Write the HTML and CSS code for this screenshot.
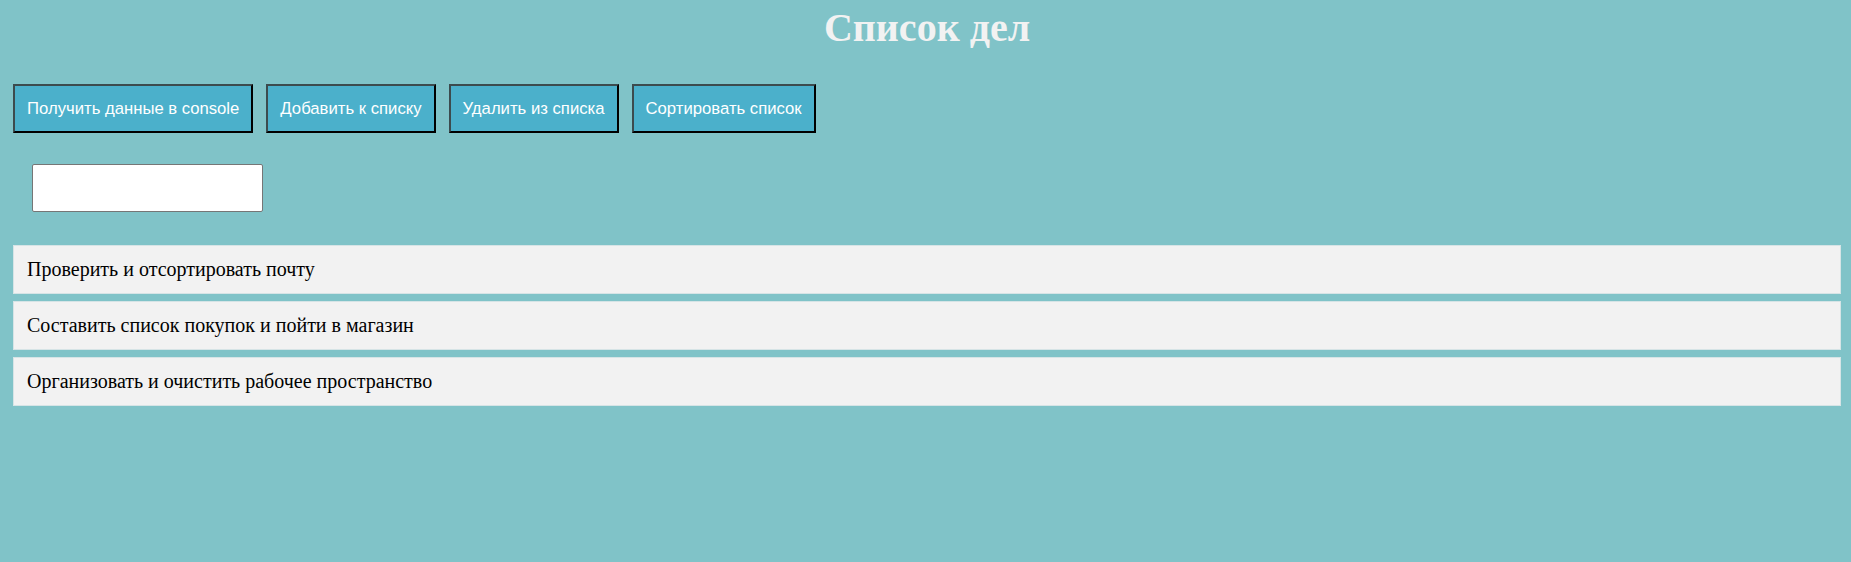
FILE: index.html
```html
<!DOCTYPE html>
<html lang="ru">
<head>
<meta charset="utf-8">
<title>Список дел</title>
<link rel="stylesheet" href="styles.css">
</head>
<body>
<div class="page">
  <h1 class="title">Список дел</h1>
  <div class="toolbar">
    <button class="btn">Получить данные в console</button>
    <button class="btn">Добавить к списку</button>
    <button class="btn">Удалить из списка</button>
    <button class="btn">Сортировать список</button>
  </div>
  <input class="field" type="text">
  <ul class="list">
    <li class="item">Проверить и отсортировать почту</li>
    <li class="item">Составить список покупок и пойти в магазин</li>
    <li class="item">Организовать и очистить рабочее пространство</li>
  </ul>
</div>
</body>
</html>
```
FILE: styles.css
```css
html, body {
  margin: 0;
  background: #80c3c8;
  font-family: "Liberation Serif", "Times New Roman", serif;
}
.page {
  padding: 6px 10px 0 13px;
  display: flex;
  flex-direction: column;
  align-items: flex-start;
}
.title {
  align-self: stretch;
  margin: 0;
  height: 44px;
  line-height: 44px;
  font-size: 40px;
  font-weight: bold;
  color: #f2f2f2;
  text-align: center;
}
.toolbar {
  display: flex;
  gap: 13px;
  margin-top: 34px;
}
.btn {
  box-sizing: border-box;
  height: 49px;
  padding: 1px 12px 0;
  background: #4bb0cb;
  color: #ffffff;
  font-family: "Liberation Sans", Arial, sans-serif;
  font-size: 16.7px;
  border: 2px solid;
  border-color: #3c4b4e #000 #000 #3c4b4e;
  cursor: pointer;
}
.field {
  box-sizing: border-box;
  margin: 31px 0 0 19px;
  width: 231px;
  height: 48px;
  border: 1px solid #767676;
  border-radius: 2px;
  background: #fff;
  padding: 1px 2px;
}
.list {
  align-self: stretch;
  list-style: none;
  margin: 33px 0 0;
  padding: 0;
  display: flex;
  flex-direction: column;
  gap: 7px;
}
.item {
  box-sizing: border-box;
  height: 49px;
  display: flex;
  align-items: center;
  padding: 0 13px;
  background: #f2f2f2;
  border: 1px solid #d6e4e6;
  font-size: 20px;
  color: #000;
}
```
